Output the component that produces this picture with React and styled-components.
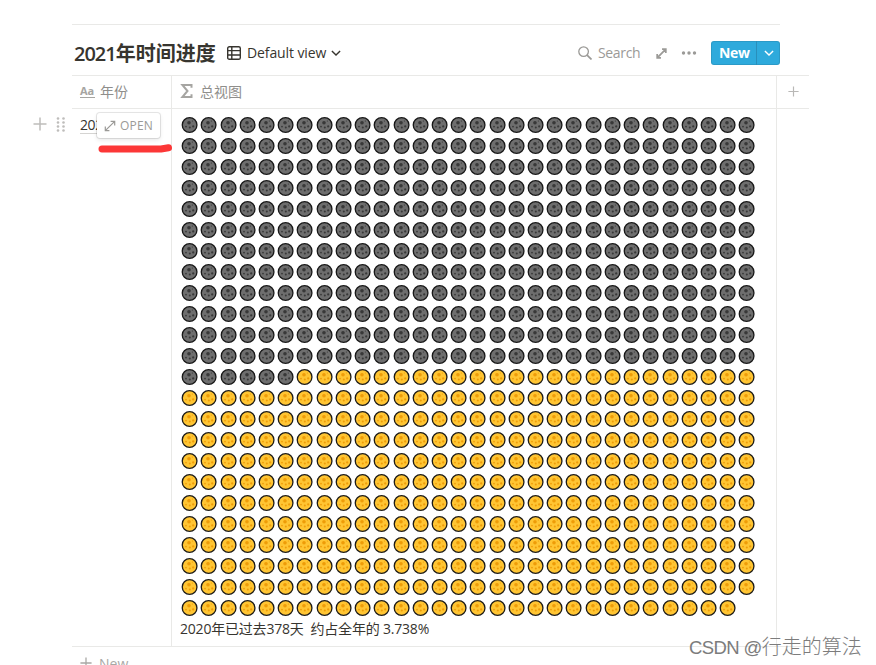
import React from 'react';
import styled, { createGlobalStyle } from 'styled-components';

const GlobalStyle = createGlobalStyle`
  * {
    box-sizing: border-box;
  }

  body {
    margin: 0;
    background: #fff;
    overflow: hidden;
  }
`;

const Page = styled.div`
  position: relative;
  width: 876px;
  height: 665px;
  padding: 24px 0 0 72px;
  overflow: hidden;
  color: #37352f;
  font-family: 'Open Sans', 'Noto Sans CJK SC', sans-serif;
  font-size: 14px;
  line-height: 21px;

  & svg {
    display: block;
    flex: none;
  }
`;

const Text = styled.span`
  letter-spacing: ${(props) => props.$spacing || 0}px;
  white-space: pre;
`;

const Toolbar = styled.header`
  display: flex;
  align-items: center;
  justify-content: space-between;
  width: 708px;
  height: 51px;
  padding-top: 6px;
  border-top: 1px solid #e9e9e7;
`;

const ToolbarGroup = styled.div`
  display: flex;
  align-items: center;
  color: #9b9a97;
`;

const Title = styled.h1`
  margin: 2px 11px 0 2px;
  width: 142px;
  color: #37352f;
  font-size: 20px;
  font-weight: 600;
  line-height: 26px;
  white-space: nowrap;

  & b {
    font-weight: 700;
  }
`;

const ViewButton = styled.div`
  display: flex;
  align-items: center;
  color: #37352f;
  font-weight: 500;

  & span {
    width: 80px;
    margin: 0 4px 0 6px;
    padding-bottom: 1px;
  }
`;

const Search = styled.div`
  display: flex;
  align-items: center;
  margin-right: 16px;

  & span {
    width: 42px;
    margin-left: 6px;
    padding-bottom: 1px;
  }
`;

const NewButton = styled.div`
  display: flex;
  height: 24px;
  margin-left: 14px;
  border-radius: 3px;
  background: #2eaadc;
  box-shadow: inset 0 0 0 1px rgba(15, 15, 15, 0.1);
  color: #fff;
  font-weight: 700;
  line-height: 24px;

  & > span {
    width: 45px;
    padding-left: 8px;
  }

  & > div {
    display: flex;
    align-items: center;
    justify-content: center;
    width: 24px;
    border-left: 1px solid #298fbb;
  }
`;

const Row = styled.div`
  display: grid;
  grid-template-columns: 100px 605px 32px;
  width: 737px;
  height: ${(props) => props.$height}px;
  border-top: 1px solid #e9e9e7;
`;

const HeadCell = styled.div`
  display: flex;
  align-items: center;
  padding: 0 0 2px ${(props) => (props.$last ? 11 : 8)}px;
  border-right: ${(props) => (props.$last ? 0 : 1)}px solid #e9e9e7;
  color: ${(props) => (props.$last ? '#b9b8b6' : '#8f8e8b')};

  & span {
    margin-left: 6px;
  }
`;

const TypeIcon = styled.div`
  width: 15px;
  height: 13px;
  margin-right: -1px;
  border-bottom: 1px solid #a6a5a2;
  color: #a6a5a2;
  font-size: 11px;
  font-weight: 700;
  line-height: 12px;
`;

const Cell = styled.div`
  position: relative;
  padding: 5px 8px 0;
  border-right: 1px solid #e9e9e7;
`;

const YearName = styled.span`
  display: inline-block;
  height: 20px;
  border-bottom: 1px solid #d5d4d2;
  font-weight: 500;
  letter-spacing: -0.4px;
`;

const RowHandle = styled.div`
  position: absolute;
  top: 8px;
  left: -39px;
  display: flex;
  gap: 8px;
  color: #bebdbb;
`;

const OpenButton = styled.div`
  position: absolute;
  top: 4px;
  left: 25px;
  display: flex;
  align-items: center;
  width: 63px;
  height: 25px;
  padding-left: 7px;
  border-radius: 3px;
  background: #fff;
  box-shadow: 0 0 0 1px rgba(15, 15, 15, 0.1), 0 2px 4px rgba(15, 15, 15, 0.1);
  color: #9b9a97;
  font-size: 12px;
  font-weight: 500;

  & span {
    margin-left: 4px;
  }
`;

const Marker = styled.div`
  position: absolute;
  top: 33px;
  left: 25px;
`;

const MoonGrid = styled.div`
  display: grid;
  grid-template-columns: repeat(30, 19.22px);
  grid-auto-rows: 21px;
  justify-items: center;
  align-items: center;
`;

const FooterRow = styled.div`
  display: flex;
  align-items: center;
  width: 737px;
  height: 33px;
  padding-left: 8px;
  border-top: 1px solid #e9e9e7;
  color: #a9a8a5;

  & span {
    margin-left: 7px;
  }
`;

const Watermark = styled.div`
  position: absolute;
  top: 634px;
  left: 689px;
  color: #7c7c7c;
  font-family: 'Liberation Sans', 'Noto Sans CJK SC', sans-serif;
  font-size: 20px;
  font-weight: 300;
  line-height: 26px;
  white-space: nowrap;

  & span {
    font-size: 18.5px;
    letter-spacing: -0.6px;
  }
`;

const TOTAL = 719;
const PASSED = 366;

function Moon({ dark }) {
  const spot = dark ? '#383838' : '#ee9c08';
  return (
    <svg width='17' height='17' viewBox='0 0 17 17'>
      <circle
        cx='8.6'
        cy='9'
        r='7.35'
        fill={dark ? '#6e6e6e' : '#ffc533'}
        stroke={dark ? '#171717' : '#1c1a16'}
        strokeWidth='1.3'
      />
      <circle cx='8' cy='6.7' r='1.8' fill={spot} />
      <circle cx='12.2' cy='10.4' r='1.1' fill={spot} />
      <circle cx='5' cy='10.6' r='0.9' fill={spot} />
      <circle cx='8.8' cy='11.5' r='1' fill={spot} />
      <circle cx='11.4' cy='5' r='0.6' fill={spot} />
    </svg>
  );
}

function Plus({ size }) {
  return (
    <svg width={size} height={size} viewBox='0 0 14 14' stroke='currentColor' strokeWidth='1.5'>
      <path d='M7 .5v13M.5 7h13' />
    </svg>
  );
}

function Chevron() {
  return (
    <svg width='10' height='10' viewBox='0 0 10 10' fill='none' stroke='currentColor' strokeWidth='1.4'>
      <path d='M.9 3 5 7.1 9.1 3' />
    </svg>
  );
}

function Expand({ size, weight }) {
  return (
    <svg width={size} height={size} viewBox='0 0 12 12' fill='none' stroke='currentColor' strokeWidth={weight}>
      <path d='M6.6 1.3h4.1v4.1M10.7 1.3 1.3 10.7M5.4 10.7H1.3V6.6' />
    </svg>
  );
}

export default function App() {
  return (
    <>
      <GlobalStyle />
      <Page>
        <Toolbar>
          <ToolbarGroup>
            <Title>
              <Text $spacing={-1}>2021</Text>
              <b>年时间进度</b>
            </Title>
            <ViewButton>
              <svg width='14' height='14' viewBox='0 0 14 14' fill='none' stroke='currentColor' strokeWidth='1.4'>
                <rect x='.7' y='.7' width='12.6' height='12.6' rx='1.6' />
                <path d='M.7 4.6h12.6M.7 9h12.6M4.8.7v12.6' />
              </svg>
              <Text $spacing={-0.1}>Default view</Text>
              <Chevron />
            </ViewButton>
          </ToolbarGroup>
          <ToolbarGroup>
            <Search>
              <svg width='14' height='14' viewBox='0 0 14 14' fill='none' stroke='currentColor' strokeWidth='1.3'>
                <circle cx='5.6' cy='5.6' r='4.8' />
                <path d='m9.1 9.1 4.4 4.4' strokeWidth='1.7' />
              </svg>
              <Text $spacing={-0.35}>Search</Text>
            </Search>
            <Expand size={11} weight={1.9} />
            <svg width='16' height='14' viewBox='0 0 16 14' fill='currentColor' style={{ marginLeft: 14 }}>
              <circle cx='2.5' cy='7' r='1.7' />
              <circle cx='8' cy='7' r='1.7' />
              <circle cx='13.5' cy='7' r='1.7' />
            </svg>
            <NewButton>
              <Text $spacing={-0.3}>New</Text>
              <div>
                <Chevron />
              </div>
            </NewButton>
          </ToolbarGroup>
        </Toolbar>

        <Row $height={33}>
          <HeadCell>
            <TypeIcon>Aa</TypeIcon>
            <Text>年份</Text>
          </HeadCell>
          <HeadCell>
            <svg width='14' height='14' viewBox='0 0 14 14' fill='none' stroke='#a6a5a2' strokeWidth='2'>
              <path d='M11.5 3.8V1H2.4L7.5 7l-5.1 6h9.1v-2.8' />
            </svg>
            <Text>总视图</Text>
          </HeadCell>
          <HeadCell $last>
            <Plus size={11} />
          </HeadCell>
        </Row>

        <Row $height={538}>
          <Cell>
            <RowHandle>
              <Plus size={14} />
              <svg width='12' height='15' viewBox='0 0 12 15' fill='currentColor'>
                {[1.5, 5.5, 9.5, 13.5].map((y) => (
                  <React.Fragment key={y}>
                    <circle cx='3' cy={y} r='1.3' />
                    <circle cx='8.5' cy={y} r='1.3' />
                  </React.Fragment>
                ))}
              </svg>
            </RowHandle>
            <YearName>2021</YearName>
            <OpenButton>
              <Expand size={12} weight={1.2} />
              <Text $spacing={0.2}>OPEN</Text>
            </OpenButton>
            <Marker>
              <svg width='76' height='12' viewBox='0 0 76 12' fill='none' stroke='#fc3737'>
                <path d='M5 7.1 64 7l7.5-1.2' strokeWidth='7' strokeLinecap='round' strokeLinejoin='round' />
              </svg>
            </Marker>
          </Cell>
          <Cell>
            <MoonGrid>
              {Array.from({ length: TOTAL }, (_, i) => (
                <Moon key={i} dark={i < PASSED} />
              ))}
            </MoonGrid>
            <Text $spacing={-0.2}>2020年已过去378天  约占全年的 3.738%</Text>
          </Cell>
        </Row>

        <FooterRow>
          <Plus size={12} />
          <Text>New</Text>
        </FooterRow>
        <Watermark>
          <Text>CSDN @</Text>行走的算法
        </Watermark>
      </Page>
    </>
  );
}
